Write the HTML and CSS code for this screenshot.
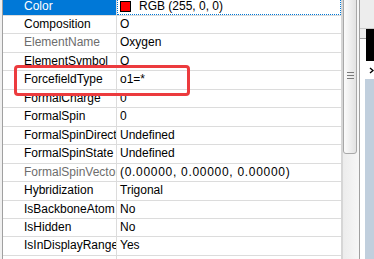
FILE: index.html
```html
<!DOCTYPE html>
<html lang="en">
<head>
    <meta charset="UTF-8">
    <title>Atom Properties</title>
    <link rel="stylesheet" href="styles.css">
</head>
<body>
    <div class="window">
        <div class="grid">
            <div class="rows">
                <div class="row selected">
                    <div class="name">Color</div>
                    <div class="value"><span class="swatch"></span>RGB (255, 0, 0)</div>
                </div>
                <div class="row"><div class="name">Composition</div><div class="value">O</div></div>
                <div class="row"><div class="name readonly">ElementName</div><div class="value">Oxygen</div></div>
                <div class="row"><div class="name">ElementSymbol</div><div class="value">O</div></div>
                <div class="row"><div class="name">ForcefieldType</div><div class="value">o1=*</div></div>
                <div class="row"><div class="name">FormalCharge</div><div class="value">0</div></div>
                <div class="row"><div class="name">FormalSpin</div><div class="value">0</div></div>
                <div class="row"><div class="name">FormalSpinDirection</div><div class="value">Undefined</div></div>
                <div class="row"><div class="name">FormalSpinState</div><div class="value">Undefined</div></div>
                <div class="row"><div class="name readonly">FormalSpinVector</div><div class="value vector">(0.00000, 0.00000, 0.00000)</div></div>
                <div class="row"><div class="name">Hybridization</div><div class="value">Trigonal</div></div>
                <div class="row"><div class="name">IsBackboneAtom</div><div class="value">No</div></div>
                <div class="row"><div class="name">IsHidden</div><div class="value">No</div></div>
                <div class="row"><div class="name">IsInDisplayRange</div><div class="value">Yes</div></div>
                <div class="row"><div class="name"></div><div class="value"></div></div>
            </div>
            <!-- highlight drawn over the grid -->
            <div class="callout"></div>
        </div>
        <div class="scrollbar">
            <div class="thumb"><span class="grip"></span></div>
        </div>
        <div class="side">
            <div class="side-top"></div>
            <div class="side-media">
                <div class="edge"></div>
                <div class="screen"></div>
            </div>
            <div class="side-arrow">
                <svg width="5" height="7" viewBox="0 0 5 7"><path d="M1 1 L4 3.5 L1 6" fill="none" stroke="#000" stroke-width="1.4"/></svg>
            </div>
            <div class="side-tree"></div>
        </div>
    </div>
</body>
</html>
```

FILE: styles.css
```css
body {
    margin: 0;
    width: 374px;
    height: 259px;
    overflow: hidden;
    background: #fff;
    font-family: "Liberation Sans", Arial, sans-serif;
    font-size: 12px;
    color: #000;
}

.window {
    display: flex;
    height: 259px;
}

/* property grid */
.grid {
    position: relative;
    flex: none;
    width: 341px;
    padding-left: 2px;
    background: #f0f0f0;
    box-sizing: border-box;
    overflow: hidden;
}

.rows {
    margin-top: -2.46px;
    border-left: 1px solid #a0a0a0;
    background: #fff;
    height: 280px;
}

.row {
    display: flex;
    height: 18.46px;
    box-sizing: border-box;
    border-bottom: 1px solid #dcdcdc;
}

.name {
    flex: none;
    width: 114px;
    padding-left: 21px;
    box-sizing: border-box;
    border-right: 1px solid #dcdcdc;
    line-height: 17.46px;
    white-space: nowrap;
    overflow: hidden;
}

.name.readonly {
    color: #6d6d6d;
}

.value {
    flex: 1;
    padding-left: 3px;
    line-height: 17.46px;
    white-space: nowrap;
    overflow: hidden;
}

.value.vector {
    letter-spacing: 0.7px;
}

.row.selected .name {
    background: #0078d7;
    color: #fff;
}

.row.selected .value {
    outline: 1px dotted #0078d7;
    outline-offset: -1px;
}

.swatch {
    display: inline-block;
    width: 11px;
    height: 11px;
    box-sizing: border-box;
    border: 1px solid #000;
    background: #f00;
    margin-right: 8px;
    vertical-align: -2px;
}

.callout {
    position: absolute;
    left: 14px;
    top: 65px;
    width: 176px;
    height: 31px;
    box-sizing: border-box;
    border: 3px solid #ec3b3e;
    border-radius: 4px;
}

/* scrollbar */
.scrollbar {
    flex: none;
    width: 16px;
    border-left: 2px solid #d6d6d6;
    background: linear-gradient(to right, #ececec, #f7f7f7);
}

.thumb {
    margin-top: -3px;
    width: 14px;
    height: 157px;
    box-sizing: border-box;
    border: 1px solid #a8a8a8;
    border-radius: 0 0 3px 3px;
    background: linear-gradient(to right, #fbfbfb, #e2e2e2);
    display: flex;
    align-items: center;
    justify-content: center;
}

.grip {
    width: 7px;
    height: 7px;
    background: repeating-linear-gradient(#7a7a7a 0 1px, transparent 1px 3px);
}

/* neighbouring panel */
.side {
    flex: none;
    width: 14px;
    border-left: 1px solid #a0a0a0;
    display: flex;
    flex-direction: column;
    background: #fff;
}

.side-top {
    height: 29px;
    background: #ededed;
    border-bottom: 1px solid #c8c8c8;
    box-sizing: border-box;
}

.side-media {
    height: 32px;
    display: flex;
}

.side-media .edge {
    width: 6px;
    height: 9px;
    background: #ededed;
    border-bottom: 1px solid #a0a0a0;
}

.side-media .screen {
    flex: 1;
    background: #000;
}

.side-arrow {
    height: 18px;
    display: flex;
    align-items: center;
    padding-left: 9px;
}

.side-tree {
    flex: 1;
    margin-left: 5px;
    background: #c1cfdd;
}
```
